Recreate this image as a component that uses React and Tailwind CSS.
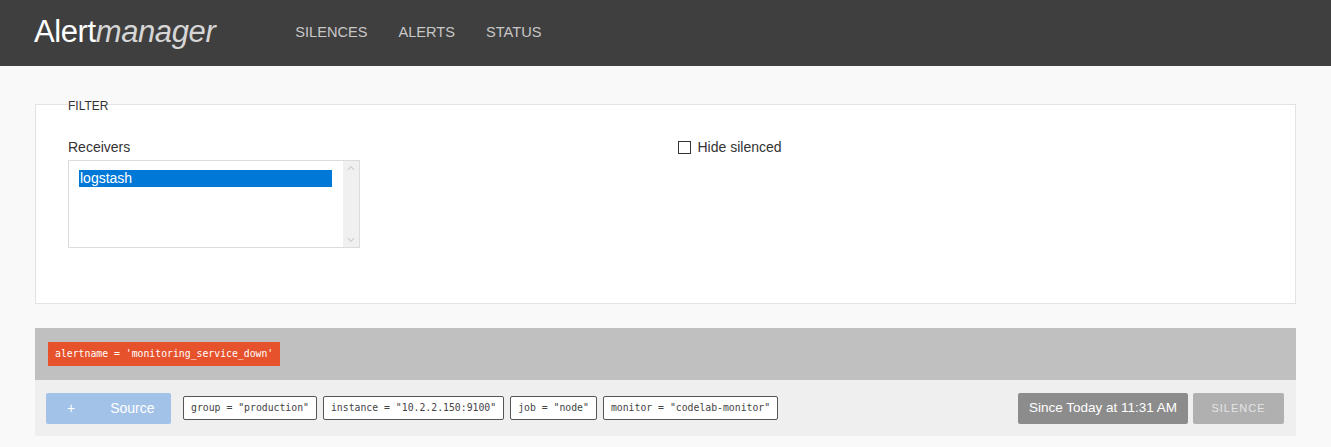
import { useState } from "react";

const labels = [
  'group = "production"',
  'instance = "10.2.2.150:9100"',
  'job = "node"',
  'monitor = "codelab-monitor"',
];

export default function App() {
  const [hide, setHide] = useState(false);

  return (
    <div className="min-h-[447px] bg-[#f9f9f9] font-['Liberation_Sans',Arial,sans-serif]">
      {/* top bar */}
      <nav className="h-[66px] bg-[#3f3f3f] flex items-center pl-[34px]">
        <a className="text-[31px] leading-none text-white tracking-[-0.4px] pb-[4px]">
          Alert<em className="text-[#d6d6d6]">manager</em>
        </a>
        <ul className="flex items-center ml-[80px] gap-[31px] text-[14.6px] text-[#c8c8c8] pb-[1px]">
          <li>SILENCES</li>
          <li>ALERTS</li>
          <li>STATUS</li>
        </ul>
      </nav>

      <div className="px-[35px] pt-[30px]">
        {/* filter */}
        <fieldset className="border border-[#e3e3e3] bg-white h-[208px] px-[32px] grid grid-cols-2">
          <legend className="text-[12px] text-[#333] leading-[12px] pt-[4px]">FILTER</legend>
          <div className="pt-[28px]">
            <div className="text-[14px] text-[#333] leading-none mb-[6px]">Receivers</div>
            <div className="w-[292px] h-[88px] border border-[#dcdcdc] flex bg-white">
              <div className="flex-1 pt-[9px] pl-[10px] pr-[5px]">
                <div className="bg-[#0078d7] text-white text-[14px] leading-[16px] h-[17px] w-[253px] pl-[1px]">logstash</div>
              </div>
              <div className="w-[16px] bg-[#f0f0f0] flex flex-col justify-between items-center py-[4px] text-[#c0c0c0]">
                <svg width="8" height="6" viewBox="0 0 8 6"><path d="M1 5 L4 1.5 L7 5" fill="none" stroke="currentColor" strokeWidth="1" /></svg>
                <svg width="8" height="6" viewBox="0 0 8 6"><path d="M1 1 L4 4.5 L7 1" fill="none" stroke="currentColor" strokeWidth="1" /></svg>
              </div>
            </div>
          </div>
          <div className="pt-[25px] pl-[12px]">
            <label className="flex items-center gap-[7px] text-[14px] text-[#333]">
              <input
                type="checkbox"
                checked={hide}
                onChange={(e) => setHide(e.target.checked)}
                className="appearance-none w-[13px] h-[13px] border border-[#333] bg-white m-0"
              />
              Hide silenced
            </label>
          </div>
        </fieldset>

        {/* alert group */}
        <div className="mt-[24px]">
          <div className="h-[52px] bg-[#c0c0c0] flex items-center pl-[13px]">
            <span className="bg-[#e5522b] text-white font-['DejaVu_Sans_Mono',monospace] text-[9.8px] h-[24px] px-[7px] flex items-center">
              alertname = 'monitoring_service_down'
            </span>
          </div>
          <div className="h-[56px] bg-[#efefef] flex items-center pl-[11px] pr-[12px]">
            <button className="w-[125px] h-[31px] bg-[#a3c2e8] text-white text-[14px] rounded-[2px] flex items-center">
              <span className="ml-[21px]">+</span>
              <span className="ml-[35px]">Source</span>
            </button>
            <div className="flex gap-[6px] ml-[12px]">
              {labels.map((l) => (
                <span
                  key={l}
                  className="h-[24px] px-[7px] border border-[#555] rounded-[2px] flex items-center font-['DejaVu_Sans_Mono',monospace] text-[9.8px] text-[#444] bg-white"
                >
                  {l}
                </span>
              ))}
            </div>
            <div className="ml-auto flex gap-[5px]">
              <button className="w-[170px] h-[31px] bg-[#8c8c8c] text-white text-[13.5px] rounded-[2px]">
                Since Today at 11:31 AM
              </button>
              <button className="w-[91px] h-[31px] bg-[#b0b0b0] text-[#e4e4e4] text-[11px] tracking-[1px] rounded-[2px]">
                SILENCE
              </button>
            </div>
          </div>
        </div>
      </div>
    </div>
  );
}
